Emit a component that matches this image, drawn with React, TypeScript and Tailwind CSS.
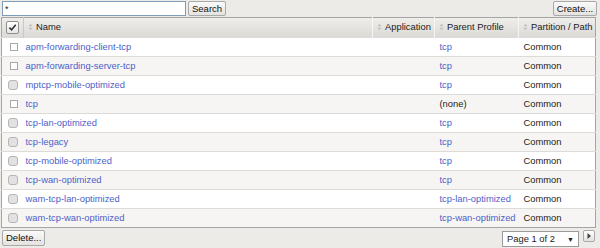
const rows = [
  { name: "apm-forwarding-client-tcp", parent: "tcp", round: false },
  { name: "apm-forwarding-server-tcp", parent: "tcp", round: false },
  { name: "mptcp-mobile-optimized", parent: "tcp", round: true },
  { name: "tcp", parent: "(none)", round: false },
  { name: "tcp-lan-optimized", parent: "tcp", round: true },
  { name: "tcp-legacy", parent: "tcp", round: true },
  { name: "tcp-mobile-optimized", parent: "tcp", round: true },
  { name: "tcp-wan-optimized", parent: "tcp", round: true },
  { name: "wam-tcp-lan-optimized", parent: "tcp-lan-optimized", round: true },
  { name: "wam-tcp-wan-optimized", parent: "tcp-wan-optimized", round: true },
];

const SortIcon = () => (
  <svg viewBox="0 0 6 9" className="mr-[3px] inline-block h-[8px] w-[5px] align-[-1px]" aria-hidden="true">
    <path d="M3 0.5 5.5 3.5H0.5Z M3 8.5 0.5 5.5H5.5Z" fill="#c0c0c0" />
  </svg>
);

const Btn = ({ children, className = "" }: { children: React.ReactNode; className?: string }) => (
  <button
    type="button"
    className={`flex h-[15px] items-center rounded-[2px] border border-[#a9a9a9] bg-gradient-to-b from-[#fafafa] to-[#e4e3e0] px-[3px] text-[9.5px] leading-none text-[#111] ${className}`}
  >
    {children}
  </button>
);

function HeadCell({ label, w, last = false }: { label: string; w: string; last?: boolean }) {
  return (
    <th
      className={`${w} overflow-hidden whitespace-nowrap border-l border-[#c9c8c5] px-[4px] text-left font-normal text-[#222] ${
        last ? "" : "border-r border-r-[#f6f6f4]"
      }`}
    >
      <SortIcon />
      {label}
    </th>
  );
}

export default function App() {
  return (
    <div className="h-[248px] w-[600px] overflow-hidden bg-[#ecebe8] font-['Liberation_Sans',Arial,sans-serif] text-[9.4px] text-[#222]">
      <div className="flex h-[17px] items-start pt-[1px]">
        <input
          readOnly
          value="*"
          className="ml-[2px] h-[15px] w-[184px] border border-[#7f9db9] bg-white px-[2px] text-[9px] leading-[13px] outline-none"
        />
        <Btn className="ml-[2px]">Search</Btn>
        <Btn className="ml-auto mr-[3px] w-[44px] justify-center">Create...</Btn>
      </div>

      <table className="ml-[1px] w-[594px] table-fixed border-collapse border border-[#a5a5a5]">
        <thead>
          <tr className="h-[20px] bg-gradient-to-b from-[#efeeeb] to-[#dad9d6]">
            <th className="w-[22px] px-0">
              <span className="ml-[4px] flex h-[13px] w-[13px] items-center justify-center rounded-[2px] border border-[#8f8f8f] bg-gradient-to-b from-white to-[#e6e6e6]">
                <svg viewBox="0 0 10 10" className="h-[9px] w-[9px]" aria-hidden="true">
                  <path d="M1.5 5.2 4 7.6 8.6 2" fill="none" stroke="#333" strokeWidth="1.8" />
                </svg>
              </span>
            </th>
            <HeadCell label="Name" w="w-[349px]" />
            <HeadCell label="Application" w="w-[62px]" />
            <HeadCell label="Parent Profile" w="w-[84px]" />
            <HeadCell label="Partition / Path" w="w-[77px]" last />
          </tr>
        </thead>
        <tbody>
          {rows.map((r, i) => (
            <tr
              key={r.name}
              className={`h-[19px] whitespace-nowrap border-t border-[#dcdbd8] ${i % 2 === 0 ? "bg-white" : "bg-[#f6f5f3]"}`}
            >
              <td className="px-0">
                {r.round ? (
                  <span className="ml-[6px] block h-[10px] w-[10px] rounded-[3px] border border-[#b5b5b5] bg-[#e2e2e2]" />
                ) : (
                  <span className="ml-[8px] block h-[8px] w-[8px] border border-[#a8a8a8] bg-white" />
                )}
              </td>
              <td className="px-[2px] text-[#4e5fc8]">{r.name}</td>
              <td />
              <td className="px-[5px] text-[#4e5fc8]">
                {r.parent === "(none)" ? <span className="text-[#222]">(none)</span> : r.parent}
              </td>
              <td className="px-[5px]">Common</td>
            </tr>
          ))}
        </tbody>
      </table>

      <div className="flex items-start pt-[2px]">
        <Btn className="ml-[2px] h-[16px]">Delete...</Btn>
        <div className="ml-auto mr-[4px] mt-[1px] flex h-[16px] w-[77px] items-center justify-between border border-[#9a9a9a] bg-white pl-[4px] pr-[4px] leading-none">
          <span>Page 1 of 2</span>
          <span className="text-[7px]">▼</span>
        </div>
        <span className="mr-[5px] flex h-[12px] w-[12px] items-center justify-center rounded-[2px] border border-[#a9a9a9] bg-gradient-to-b from-white to-[#e2e1de]">
          <svg viewBox="0 0 4 6" className="h-[6px] w-[4px]" aria-hidden="true">
            <path d="M0.5 0 4 3 0.5 6Z" fill="#444" />
          </svg>
        </span>
      </div>
    </div>
  );
}
